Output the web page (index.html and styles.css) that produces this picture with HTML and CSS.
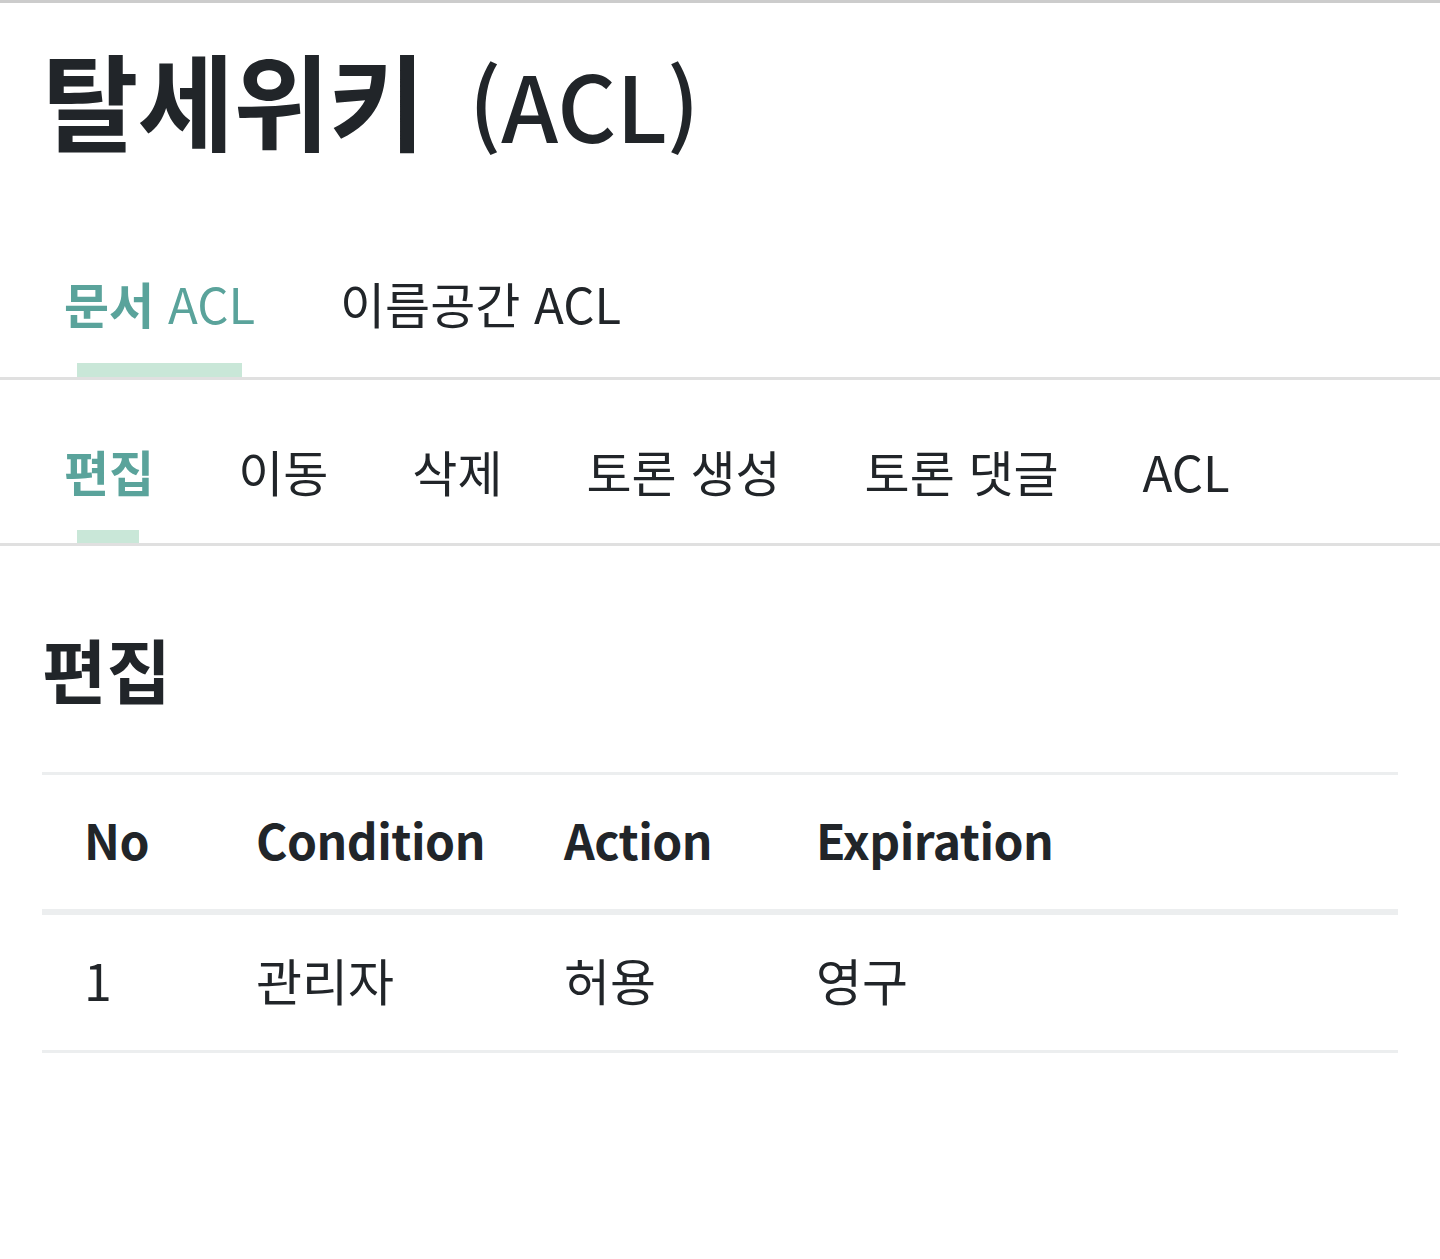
FILE: index.html
```html
<!DOCTYPE html>
<html lang="ko">
<head>
<meta charset="utf-8">
<title>탈세위키 (ACL)</title>
<link rel="stylesheet" href="styles.css">
</head>
<body>
<div class="topline"></div>
<main class="page">
  <h1 class="title">탈세위키 <span class="latin">(ACL)</span></h1>
  <nav class="tabs tabs-main">
    <a class="tab active" href="#">문서 <span class="latin">ACL</span></a>
    <a class="tab" href="#">이름공간 ACL</a>
  </nav>
  <nav class="tabs tabs-sub">
    <a class="tab active" href="#">편집</a>
    <a class="tab" href="#">이동</a>
    <a class="tab" href="#">삭제</a>
    <a class="tab" href="#">토론 생성</a>
    <a class="tab" href="#">토론 댓글</a>
    <a class="tab" href="#">ACL</a>
  </nav>
  <h2 class="section-title">편집</h2>
  <table class="acl-table">
    <thead>
      <tr>
        <th class="c-no">No</th>
        <th class="c-cond">Condition</th>
        <th class="c-act">Action</th>
        <th class="c-exp">Expiration</th>
      </tr>
    </thead>
    <tbody>
      <tr>
        <td>1</td>
        <td>관리자</td>
        <td>허용</td>
        <td>영구</td>
      </tr>
    </tbody>
  </table>
</main>
</body>
</html>
```

FILE: styles.css
```css
* { box-sizing: border-box; }
html, body { margin: 0; padding: 0; background: #fff; }
body {
  font-family: "Noto Sans CJK KR", "Noto Sans", sans-serif;
  color: #212529;
}
.topline { height: 3px; background: #cccccc; }
.page { padding: 0 42px; }

.title {
  margin: 0;
  padding-top: 29px;
  font-size: 105px;
  line-height: 130px;
  font-weight: 700;
  letter-spacing: -1px;
}
.title .latin {
  font-size: 0.87em;
  line-height: 1;
  font-weight: 500;
  margin-left: 16px;
  letter-spacing: 0;
}
.tab .latin { font-weight: 400; }

.tabs {
  display: flex;
  gap: 85px;
  margin: 0 -42px;
  padding: 0 64px;
  border-bottom: 3px solid #e0e0e0;
}
.tabs-main { margin-top: 109px; }
.tabs-sub { margin-top: 59px; gap: 84px; }

.tab {
  position: relative;
  display: block;
  color: #212529;
  text-decoration: none;
  font-size: 49px;
  line-height: 60px;
  padding-top: 2px;
  padding-bottom: 44px;
  white-space: nowrap;
}
.tabs-sub .tab { padding-bottom: 42px; }
.tab.active { color: #5aa39b; font-weight: 700; }
.tab.active::after {
  content: "";
  position: absolute;
  left: 13px;
  right: 13px;
  bottom: 0;
  height: 14px;
  background: #c9e7d8;
}
.tabs-sub .tab.active::after { height: 13px; right: 15px; }

.section-title {
  margin: 0;
  margin-top: 78px;
  font-size: 70px;
  line-height: 90px;
  font-weight: 700;
}

.acl-table {
  width: 100%;
  margin-top: 58px;
  border-collapse: collapse;
  font-size: 50px;
}
.acl-table th, .acl-table td {
  text-align: left;
  padding: 26px 0 32px 42px;
  line-height: 76px;
}
.acl-table td { padding-bottom: 33px; }
.acl-table th {
  font-size: 48px;
  font-weight: 700;
  letter-spacing: -0.5px;
  border-top: 3px solid #eceeef;
  border-bottom: 6px solid #eceeef;
}
.acl-table td { border-bottom: 3px solid #eceeef; }
.c-no { width: 172px; }
.c-cond { width: 308px; }
.c-act { width: 252px; }
```
